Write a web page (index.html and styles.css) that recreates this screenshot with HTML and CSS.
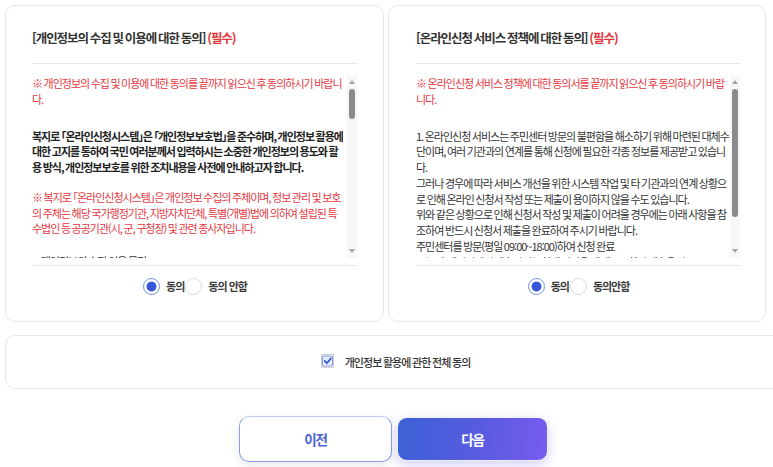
FILE: index.html
```html
<!DOCTYPE html>
<html lang="ko">
<head>
<meta charset="utf-8">
<title>개인정보 동의</title>
<link rel="stylesheet" href="styles.css">
</head>
<body>
<div class="page">
  <div class="cards">
    <section class="card card-left">
      <h2 class="card-title">[개인정보의 수집 및 이용에 대한 동의] <span class="req">(필수)</span></h2>
      <div class="scroll-wrap">
        <div class="scroll-text">
          <p class="note note-first">※ 개인정보의 수집 및 이용에 대한 동의를 끝까지 읽으신 후 동의하시기 바랍니다.</p>
          <p class="strong">복지로 「온라인신청시스템」은 「개인정보보호법」을 준수하며, 개인정보 활용에 대한 고지를 통하여 국민 여러분께서 입력하시는 소중한 개인정보의 용도와 활용 방식, 개인정보보호를 위한 조치내용을 사전에 안내하고자 합니다.</p>
          <p class="note">※ 복지로 「온라인신청시스템」은 개인정보 수집의 주체이며, 정보 관리 및 보호의 주체는 해당 국가행정기관, 지방자치단체, 특별(개별)법에 의하여 설립된 특수법인 등 공공기관(시, 군, 구청장) 및 관련 종사자입니다.</p>
          <p>1. 개인정보의 수집·이용 목적<br>복지서비스 신청에 따른 대상자 선정, 자격 확인, 급여 지급 및 사후 관리를 위하여 개인정보를 수집·이용합니다.</p>
          <p>2. 수집하는 개인정보의 항목<br>성명, 주민등록번호, 주소, 전화번호, 휴대전화번호, 가구원 정보, 소득 및 재산 정보 등</p>
        </div>
        <div class="sb" aria-hidden="true">
          <span class="sb-btn"><span class="arrow-up"></span></span>
          <span class="sb-track"><span class="sb-thumb thumb-short"></span></span>
          <span class="sb-btn"><span class="arrow-down"></span></span>
        </div>
      </div>
      <div class="choice">
        <label class="radio on"><span class="dot"></span>동의</label>
        <label class="radio"><span class="dot"></span>동의 안함</label>
      </div>
    </section>
    <section class="card card-right">
      <h2 class="card-title">[온라인신청 서비스 정책에 대한 동의] <span class="req">(필수)</span></h2>
      <div class="scroll-wrap">
        <div class="scroll-text">
          <p class="note note-first">※ 온라인신청 서비스 정책에 대한 동의서를 끝까지 읽으신 후 동의하시기 바랍니다.</p>
          <p class="plain">1. 온라인신청 서비스는 주민센터 방문의 불편함을 해소하기 위해 마련된 대체수단이며, 여러 기관과의 연계를 통해 신청에 필요한 각종 정보를 제공받고 있습니다.<br>그러나 경우에 따라 서비스 개선을 위한 시스템 작업 및 타 기관과의 연계 상황으로 인해 온라인 신청서 작성 또는 제출이 용이하지 않을 수도 있습니다.<br>위와 같은 상황으로 인해 신청서 작성 및 제출이 어려울 경우에는 아래 사항을 참조하여 반드시 신청서 제출을 완료하여 주시기 바랍니다.<br>주민센터를 방문(평일 09:00~18:00)하여 신청 완료<br>또는, 홈페이지에서 제출이 가능하게 되었을 때 재시도하여 제출을 완료</p>
        </div>
        <div class="sb" aria-hidden="true">
          <span class="sb-btn"><span class="arrow-up"></span></span>
          <span class="sb-track"><span class="sb-thumb thumb-long"></span></span>
          <span class="sb-btn"><span class="arrow-down"></span></span>
        </div>
      </div>
      <div class="choice">
        <label class="radio on"><span class="dot"></span>동의</label>
        <label class="radio"><span class="dot"></span>동의안함</label>
      </div>
    </section>
  </div>

  <div class="all-agree">
    <span class="chk">
      <svg width="13" height="14" viewBox="0 0 13 14" aria-hidden="true">
        <rect x="0.5" y="0.5" width="12" height="13" fill="none" stroke="#a0a0a0" stroke-dasharray="1 1"/>
        <rect x="1.5" y="2" width="10" height="10" rx="1" fill="#e4ebfc" stroke="#8596e0"/>
        <path d="M3.6 6.9 L5.9 9.2 L9.9 4.4" fill="none" stroke="#3556d8" stroke-width="1.7" stroke-linecap="round" stroke-linejoin="round"/>
      </svg>
    </span>
    <span class="all-label">개인정보 활용에 관한 전체 동의</span>
  </div>

  <div class="actions">
    <button class="btn btn-prev" type="button">이전</button>
    <button class="btn btn-next" type="button">다음</button>
  </div>
</div>
</body>
</html>
```

FILE: styles.css
```css
* { box-sizing: border-box; }

html, body {
  margin: 0;
  padding: 0;
  background: #ffffff;
  overflow: hidden;
}

body {
  font-family: "Noto Sans CJK KR", "Noto Sans", sans-serif;
  font-feature-settings: "palt";
  color: #333333;
  width: 773px;
  height: 467px;
}

.page {
  padding: 5px 0 0 5px;
  width: 800px;
}

.cards {
  display: grid;
  grid-template-columns: 379px 378px;
  gap: 4px;
}

.card {
  border: 1px solid #e7e7e7;
  border-radius: 10px;
  height: 317px;
  display: flex;
  flex-direction: column;
}

.card-left { padding: 0 25px 0 26px; }
.card-right { padding: 0 24px 0 27px; }

.card-title {
  margin: 0;
  padding: 23px 0 16px;
  font-size: 12.5px;
  line-height: 18px;
  font-weight: 700;
  color: #333333;
  letter-spacing: -1.05px;
  word-spacing: -0.6px;
  border-bottom: 1px solid #e8e8e8;
}

.req { color: #e2353c; }

/* scrolling text + drawn scrollbar */
.scroll-wrap {
  margin: 11px 1px 7px 0;
  height: 183px;
  display: flex;
  justify-content: space-between;
}

.scroll-text {
  overflow: hidden;
  padding-top: 1px;
  font-size: 11px;
  line-height: 15.75px;
  letter-spacing: -1px;
  word-spacing: -0.55px;
}

.card-left .scroll-text { flex: 0 0 311px; }
.card-right .scroll-text { flex: 0 0 314px; }

.scroll-text p { margin: 0 0 17px; }

.scroll-text .note { color: #e6383f; }
.scroll-text .note-first { margin-bottom: 21px; }

.scroll-text .strong {
  color: #222222;
  font-weight: 700;
  margin-bottom: 14px;
}

.scroll-text .plain { color: #333333; }

.sb {
  width: 10px;
  flex: 0 0 10px;
  display: flex;
  flex-direction: column;
  background: #f7f7f7;
}

.sb-btn {
  height: 14px;
  display: flex;
  align-items: center;
  justify-content: center;
}

.arrow-up {
  width: 0;
  height: 0;
  border-left: 3px solid transparent;
  border-right: 3px solid transparent;
  border-bottom: 4px solid #a5a5a5;
}

.arrow-down {
  width: 0;
  height: 0;
  border-left: 3px solid transparent;
  border-right: 3px solid transparent;
  border-top: 4px solid #a5a5a5;
}

.sb-track {
  flex: 1;
  padding: 0 2px;
}

.sb-thumb {
  display: block;
  background: #8b8b8b;
  border-radius: 3px;
}

.thumb-short { height: 30px; }
.thumb-long { height: 128px; }

/* radio choices */
.choice {
  border-top: 1px solid #e8e8e8;
  height: 56px;
  padding-bottom: 14px;
  display: flex;
  align-items: center;
  justify-content: center;
}

.radio {
  display: flex;
  align-items: center;
  font-size: 11px;
  font-weight: 700;
  color: #3a3a3a;
  letter-spacing: -1px;
  line-height: 17px;
}

.radio + .radio { margin-left: 1px; }

.dot {
  width: 17px;
  height: 17px;
  border-radius: 50%;
  border: 1px solid #dadada;
  background: #ffffff;
  margin-right: 6px;
}

.radio.on .dot {
  border: 1.5px solid #7690ec;
  background: radial-gradient(circle, #3556d8 0 4.6px, #ffffff 5.3px);
}

/* all agree */
.all-agree {
  margin-top: 13px;
  width: 781px;
  height: 54px;
  border: 1px solid #e7e7e7;
  border-radius: 10px;
  display: flex;
  align-items: center;
  justify-content: center;
  gap: 11px;
}

.chk {
  display: flex;
  width: 13px;
  height: 14px;
  margin-top: -3px;
}

.all-label {
  font-size: 11px;
  font-weight: 500;
  color: #333333;
  letter-spacing: -0.95px;
  word-spacing: -0.5px;
}

/* buttons */
.actions {
  width: 781px;
  margin-top: 27px;
  display: flex;
  justify-content: center;
  align-items: center;
  gap: 5px;
  padding-right: 4px;
}

.btn {
  font-family: "Noto Sans CJK KR", "Noto Sans", sans-serif;
  font-size: 13.5px;
  font-weight: 700;
  letter-spacing: -1.1px;
  border-radius: 10px;
  cursor: pointer;
}

.btn-prev {
  width: 153px;
  height: 46px;
  background: #ffffff;
  color: #4a63d8;
  border: 1px solid #8a9ce8;
  border-top-color: #bfc8f2;
  box-shadow: 0 4px 10px rgba(80, 80, 110, 0.12);
}

.btn-next {
  width: 151px;
  height: 44px;
  color: #ffffff;
  border: 1px solid #eef0fb;
  background: linear-gradient(100deg, #3b61d6 0%, #5a5be0 55%, #775cee 100%);
  box-shadow: 0 4px 12px rgba(95, 85, 225, 0.28);
}
```
